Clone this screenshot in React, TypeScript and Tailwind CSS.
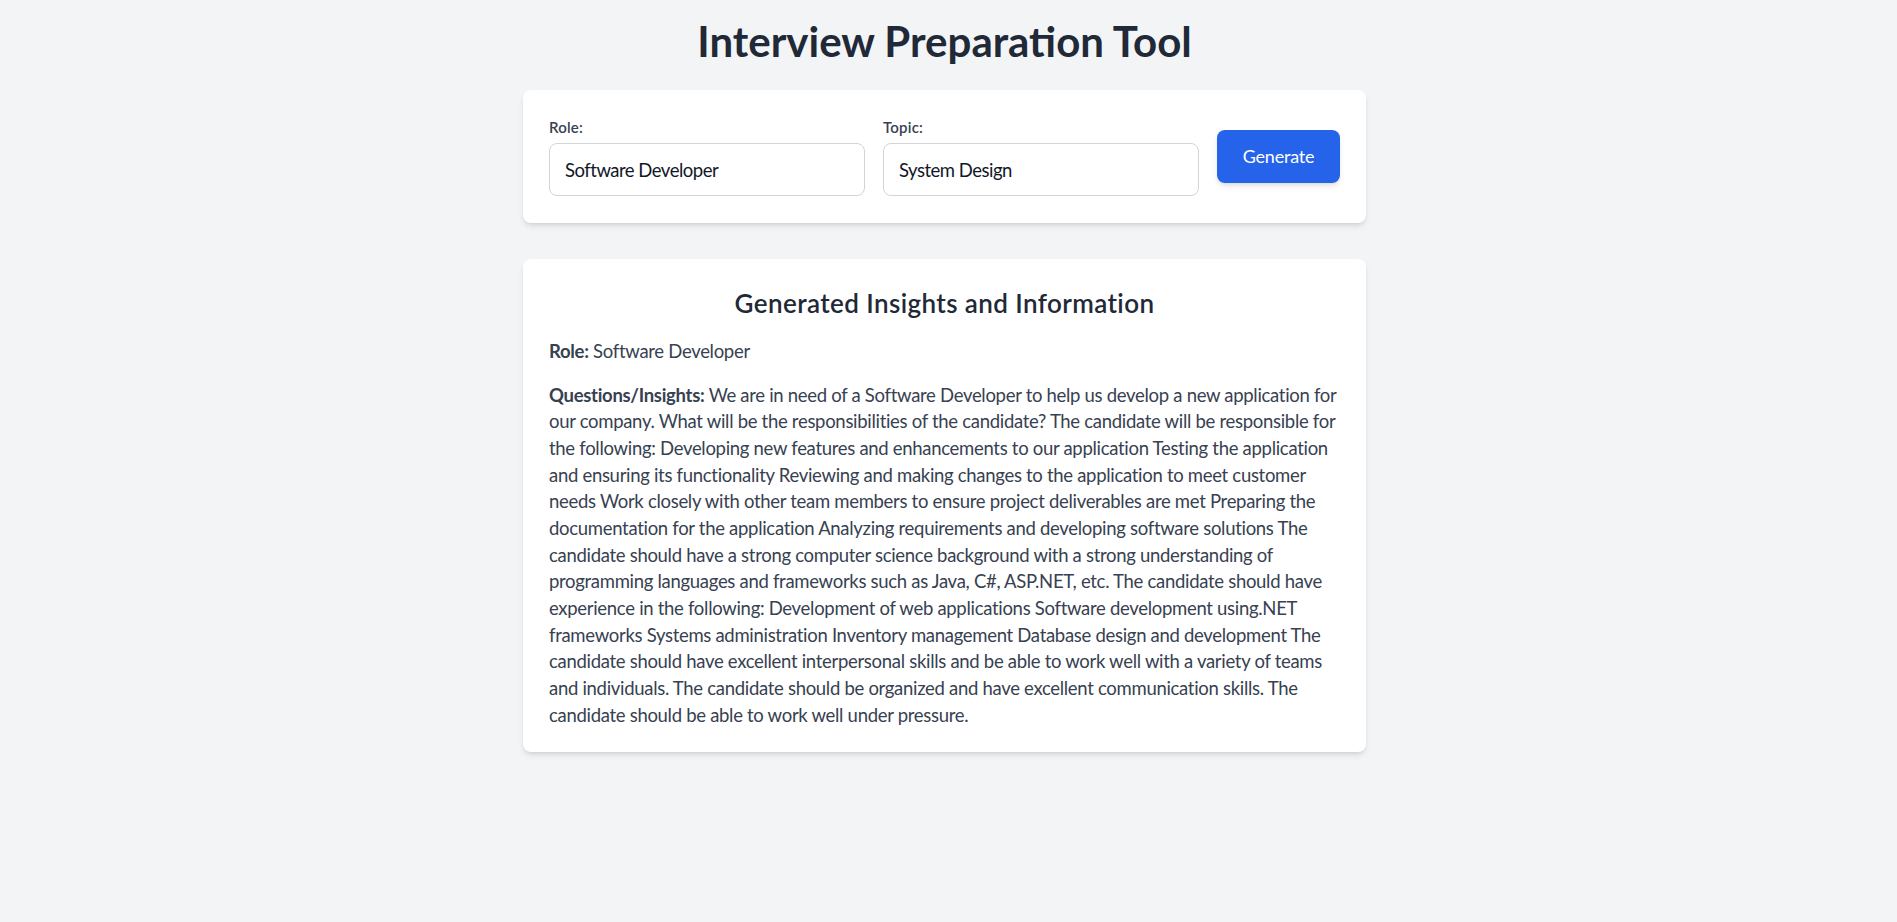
import React from "react";

const insights =
  "We are in need of a Software Developer to help us develop a new application for our company. What will be the responsibilities of the candidate? The candidate will be responsible for the following: Developing new features and enhancements to our application Testing the application and ensuring its functionality Reviewing and making changes to the application to meet customer needs Work closely with other team members to ensure project deliverables are met Preparing the documentation for the application Analyzing requirements and developing software solutions The candidate should have a strong computer science background with a strong understanding of programming languages and frameworks such as Java, C#, ASP.NET, etc. The candidate should have experience in the following: Development of web applications Software development using.NET frameworks Systems administration Inventory management Database design and development The candidate should have excellent interpersonal skills and be able to work well with a variety of teams and individuals. The candidate should be organized and have excellent communication skills. The candidate should be able to work well under pressure.";

const Field = ({ label, value }: { label: string; value: string }) => (
  <div className="flex flex-1 flex-col">
    <label className="mb-[6px] text-[15px] leading-[20px] font-semibold tracking-[0.2px] text-[#374151]">
      {label}
    </label>
    <input
      defaultValue={value}
      className="h-[53px] w-full rounded-lg border border-[#d1d5db] bg-white px-[15px] text-[18.5px] tracking-[-0.5px] text-[#111827] outline-none"
    />
  </div>
);

const App = () => {
  return (
    <div className="min-h-screen bg-[#f3f4f6] pt-[15px] pr-[8px] font-['Lato',sans-serif]">
      <h1 className="text-center text-[42px] leading-[52px] font-bold text-[#1f2937]">
        Interview Preparation Tool
      </h1>

      <div className="mx-auto mt-[23px] flex w-[843px] items-center gap-[18px] rounded-lg bg-white px-[26px] py-[27px] shadow-md">
        <Field label="Role:" value="Software Developer" />
        <Field label="Topic:" value="System Design" />
        <button className="h-[53px] w-[123px] shrink-0 rounded-lg bg-[#2563eb] text-[18px] tracking-[-0.2px] text-white shadow-md">
          Generate
        </button>
      </div>

      <div className="mx-auto mt-[36px] w-[843px] rounded-lg bg-white px-[26px] pt-[27px] pb-[24px] shadow-md">
        <h2 className="mb-[18px] text-center text-[26px] leading-[34px] font-semibold tracking-[0.4px] text-[#1f2937]">
          Generated Insights and Information
        </h2>
        <p className="mb-[17px] text-[18.5px] leading-[26.67px] tracking-[-0.3px] text-[#374151]">
          <strong className="font-bold">Role:</strong> Software Developer
        </p>
        <p className="text-[18.5px] leading-[26.67px] tracking-[-0.3px] text-[#374151]">
          <strong className="font-bold">Questions/Insights:</strong> {insights}
        </p>
      </div>
    </div>
  );
};

export default App;
